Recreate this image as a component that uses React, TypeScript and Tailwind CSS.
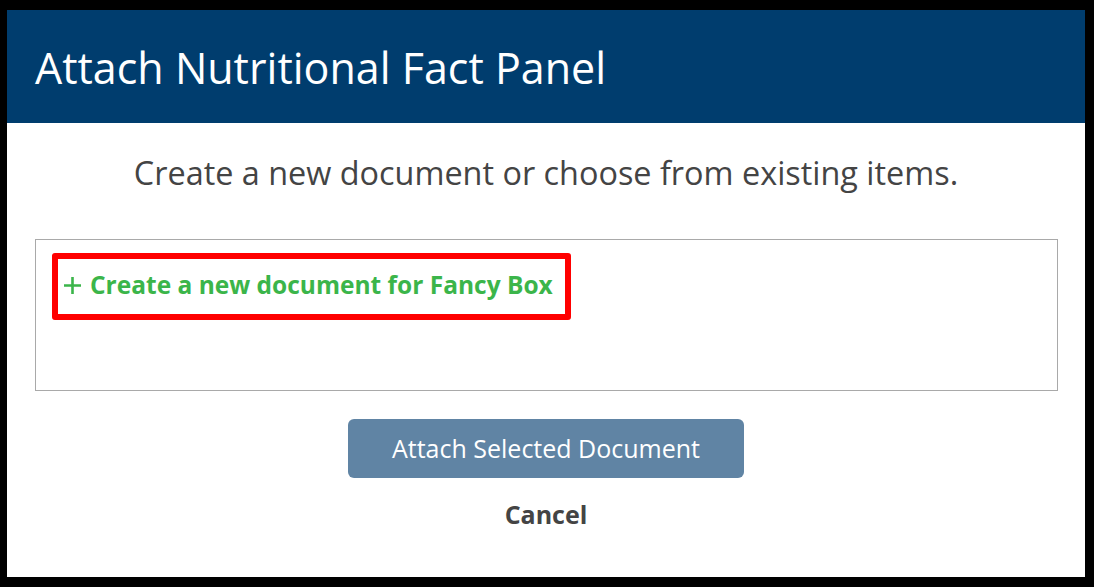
const FONT = "font-['Open_Sans',sans-serif]";

export default function App() {
  return (
    <div className={`h-[587px] w-[1094px] bg-black pt-[10px] pl-[7px] pr-[9px] pb-[10px] ${FONT}`}>
      <div className="flex h-full flex-col bg-white">
        <div className="flex h-[113px] items-center bg-[#003d6e] px-[28px] pt-[2px]">
          <h1 className="text-[43px] leading-none text-white">Attach Nutritional Fact Panel</h1>
        </div>

        <p className="mt-[33px] text-center text-[32.4px] leading-none text-[#444]">
          Create a new document or choose from existing items.
        </p>

        <div className="ml-[28px] mr-[27px] mt-[51px] h-[152px] border border-[#a9a9a9] px-[16px] pt-[13px]">
          <div className="inline-flex h-[67px] items-center rounded-[3px] border-[6px] border-[#ff0000] pb-[3px] pl-[5px] pr-[12px]">
            <span className="flex items-center gap-[8px] text-[24.5px] font-bold text-[#3bb54a]">
              <svg width="19" height="19" viewBox="0 0 19 19" className="shrink-0">
                <path d="M9.5 1v17M1 9.5h17" stroke="currentColor" strokeWidth="2.6" />
              </svg>
              Create a new document for Fancy Box
            </span>
          </div>
        </div>

        <div className="mt-[28px] flex flex-col items-center">
          <button
            type="button"
            className="h-[59px] w-[396px] rounded-[6px] bg-[#6084a4] text-[25px] text-white"
          >
            Attach Selected Document
          </button>
          <button type="button" className="mt-[24px] text-[25px] font-bold leading-none text-[#444]">
            Cancel
          </button>
        </div>
      </div>
    </div>
  );
}
